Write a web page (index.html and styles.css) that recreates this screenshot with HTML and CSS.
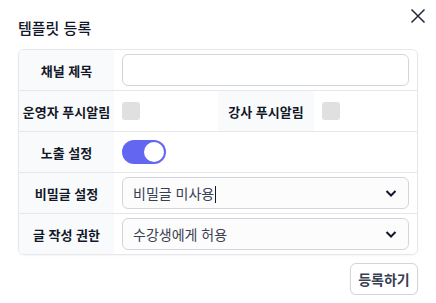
FILE: index.html
```html
<!DOCTYPE html>
<html lang="ko">

<head>
    <meta charset="UTF-8">
    <meta name="viewport" content="width=device-width, initial-scale=1.0">
    <title>템플릿 등록</title>
    <link rel="stylesheet" href="styles.css">
</head>

<body>
    <div class="modal">
        <button class="close-btn" title="닫기">
            <svg width="16" height="16" viewBox="0 0 16 16">
                <path d="M1.5 1.5 L14.5 14.5 M14.5 1.5 L1.5 14.5" stroke="#1f2937" stroke-width="1.5" fill="none" />
            </svg>
        </button>
        <h2 class="title">템플릿 등록</h2>

        <div class="form-table">
            <div class="row">
                <div class="label">채널 제목</div>
                <div class="cell">
                    <input type="text" class="text-input">
                </div>
            </div>
            <div class="row split">
                <div class="label">운영자 푸시알림</div>
                <div class="cell"><span class="checkbox"></span></div>
                <div class="label">강사 푸시알림</div>
                <div class="cell"><span class="checkbox"></span></div>
            </div>
            <div class="row">
                <div class="label">노출 설정</div>
                <div class="cell">
                    <span class="toggle on"><span class="knob"></span></span>
                </div>
            </div>
            <div class="row">
                <div class="label">비밀글 설정</div>
                <div class="cell">
                    <div class="select">
                        <span>비밀글 미사용<span class="caret"></span></span>
                        <svg width="14" height="14" viewBox="0 0 14 14">
                            <path d="M2.5 5 L7 9.5 L11.5 5" stroke="#111827" stroke-width="2" fill="none" />
                        </svg>
                    </div>
                </div>
            </div>
            <div class="row">
                <div class="label">글 작성 권한</div>
                <div class="cell">
                    <div class="select">
                        <span>수강생에게 허용</span>
                        <svg width="14" height="14" viewBox="0 0 14 14">
                            <path d="M2.5 5 L7 9.5 L11.5 5" stroke="#111827" stroke-width="2" fill="none" />
                        </svg>
                    </div>
                </div>
            </div>
        </div>

        <div class="actions">
            <button class="submit-btn">등록하기</button>
        </div>
    </div>
</body>

</html>
```

FILE: styles.css
```css
* {
    box-sizing: border-box;
    margin: 0;
    padding: 0;
}

body {
    font-family: "Noto Sans CJK KR", "Noto Sans", sans-serif;
    background-color: white;
    color: #111827;
}

.modal {
    position: relative;
    width: 436px;
    padding: 17px 18px 0 18px;
}

.close-btn {
    position: absolute;
    top: 8px;
    right: 10px;
    border: none;
    background: none;
    display: flex;
}

.title {
    font-size: 15px;
    font-weight: 500;
    line-height: 22px;
    margin-bottom: 10px;
    color: #111827;
}

.form-table {
    border: 1px solid #e5e7eb;
    border-radius: 6px;
    overflow: hidden;
    box-shadow: 0 1px 2px rgba(0, 0, 0, 0.04);
}

.row {
    display: grid;
    grid-template-columns: 95px 1fr;
    height: 41px;
    border-top: 1px solid #e5e7eb;
}

.row:first-child {
    border-top: none;
    height: 40px;
}

.row.split {
    grid-template-columns: 95px 104px 96px 1fr;
}

.label {
    background-color: #f9fafb;
    display: flex;
    align-items: center;
    justify-content: center;
    font-size: 13px;
    font-weight: 700;
    color: #111827;
}

.cell {
    display: flex;
    align-items: center;
    padding: 0 8px;
}

.text-input {
    width: 100%;
    height: 32px;
    border: 1px solid #d1d5db;
    border-radius: 6px;
    background-color: white;
    padding: 0 10px;
    font-size: 14px;
}

.checkbox {
    width: 18px;
    height: 18px;
    border-radius: 3px;
    background-color: #e0e0e0;
}

.toggle {
    width: 44px;
    height: 24px;
    border-radius: 12px;
    background-color: #e5e7eb;
    display: flex;
    align-items: center;
    padding: 2px;
}

.toggle.on {
    background-color: #6366f1;
    justify-content: flex-end;
}

.knob {
    width: 20px;
    height: 20px;
    border-radius: 50%;
    background-color: white;
}

.select {
    width: 100%;
    height: 32px;
    border: 1px solid #d1d5db;
    border-radius: 6px;
    background-color: #fcfcfd;
    padding: 0 10px;
    display: flex;
    align-items: center;
    justify-content: space-between;
    font-size: 14px;
    color: #374151;
}

.caret {
    display: inline-block;
    width: 1px;
    height: 17px;
    background-color: #111827;
    vertical-align: middle;
    margin-left: 1px;
}

.actions {
    display: flex;
    justify-content: flex-end;
    margin-top: 8px;
}

.submit-btn {
    height: 32px;
    width: 68px;
    border: 1px solid #d1d5db;
    border-radius: 6px;
    background-color: white;
    font-family: inherit;
    font-size: 14px;
    font-weight: 700;
    color: #374151;
    box-shadow: 0 1px 2px rgba(0, 0, 0, 0.05);
}
```
